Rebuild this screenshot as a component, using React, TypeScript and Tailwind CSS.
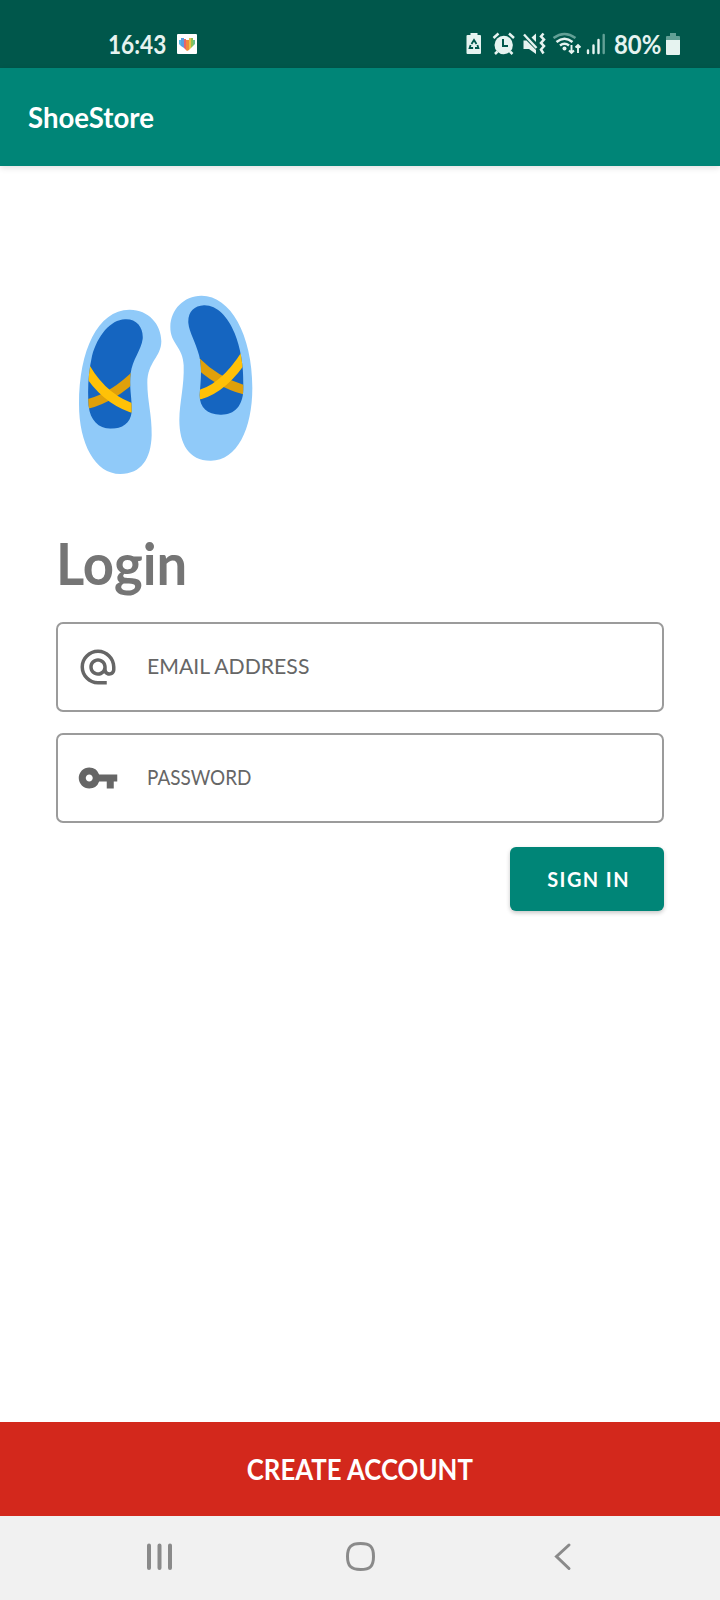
import React from "react";
import { MdAlternateEmail, MdVpnKey } from "react-icons/md";

function HeartBadge() {
  return (
    <svg width="20" height="20" viewBox="0 0 20 20">
      <rect width="20" height="20" rx="1" fill="#fff" />
      <path d="M2 6h2v6L2 10z" fill="#55b9e8" />
      <path d="M4 4h3v10L4 12z" fill="#5a9fe0" />
      <path d="M7 5h2v11L7 14z" fill="#e8646a" />
      <path d="M9 6h3v10l-2 1-1-1z" fill="#f08a3c" />
      <path d="M12 4h2v10l-2 2z" fill="#e8c04a" />
      <path d="M14 4h2v8l-2 2z" fill="#8cc152" />
      <path d="M16 6h2v4l-2 2z" fill="#6cc08a" />
    </svg>
  );
}

function StatusIcons() {
  return (
    <svg width="146" height="30" viewBox="0 0 146 30" fill="none" stroke="#e6f3f0">
      <g stroke="none" fill="#e6f3f0">
        <path d="M5.500 3h7v2h2.500q1 0 1 1v17q0 1-1 1H2.500q-1 0-1-1V6q0-1 1-1h3z" />
        <circle cx="38.700" cy="15" r="9.200" />
        <path d="M58.500 10.500h3l9.500 9.500v4l-7-5h-5.500z" />
        <path d="M66.500 7.500L71 3.500V12z" />
        <circle cx="99.500" cy="18.500" r="2" />
      </g>
      <g stroke="#00574b">
        <path d="M6.500 14l2.500-4 2.500 4M5.600 15l-1 3h3.500M12.400 15l1 3H10" strokeWidth="1.800" />
        <path d="M38 9v7h5" strokeWidth="2" />
      </g>
      <path d="M28.500 8l5-4.500M49 8l-5-4.500M32.500 21.500l-2.500 2.500M45 21.500l2.500 2.500" strokeWidth="2.500" />
      <path d="M59 4.500L71.500 18" strokeWidth="2.400" />
      <path d="M78.500 3.500l-2.500 3 3 3-3 3.500 3 3-3 3.500 2.500 4" strokeWidth="2.500" />
      <path d="M88.500 8q11-8 22 0" stroke="#62a096" strokeWidth="2.500" />
      <path d="M91.500 12q8-6.500 16 0M95 15.500q4.500-3.500 9 0" strokeWidth="2.500" />
      <path d="M106.500 15v8M104 20.500l2.500 2.500 2.500-2.500M113 23v-8M110.500 17.500L113 15l2.500 2.500" strokeWidth="1.900" />
      <g strokeWidth="2.400" strokeLinecap="round">
        <path d="M123 20.500v2.500M128.500 15.500V23M133.500 10v13" />
        <path d="M138.700 5v18" stroke="#62a096" />
      </g>
    </svg>
  );
}

function BatteryIcon() {
  return (
    <svg width="14" height="22" viewBox="0 0 14 22">
      <path d="M4 0h6v3h3q1 0 1 1v3H0V4q0-1 1-1h3z" fill="#62a096" />
      <path d="M0 7h14v14q0 1-1 1H1q-1 0-1-1z" fill="#e6f3f0" />
    </svg>
  );
}

function Flats() {
  return (
    <svg width="210" height="210" viewBox="0 0 630 630">
      <defs>
        <clipPath id="leftInner">
          <path d="M195 118C230 116 251 143 248 177C244 210 217 239 212 280C207 322 216 350 215 396C211 430 188 446 151 446C116 446 90 420 86 378C82 330 85 278 96 228C113 166 151 120 195 118Z" />
        </clipPath>
        <clipPath id="rightInner">
          <path d="M432 76C470 75 504 110 524 160C543 207 552 265 550 330C548 378 524 404 484 404C443 405 419 384 419 346C421 306 428 266 417 225C407 187 388 158 385 129C383 97 402 77 432 76Z" />
        </clipPath>
      </defs>
      <path fill="#90caf9" d="M208 89C264 88 304 132 304 184C304 231 262 246 262 309C262 363 276 405 275 466C273 536 244 582 181 582C105 582 57 491 57 372C57 211 113 91 208 89Z" />
      <path fill="#90caf9" d="M424 47C510 46 577 163 577 323C577 447 531 541 453 542C387 543 358 492 358 420C359 364 373 319 371 256C370 201 330 191 331 140C332 88 371 48 424 47Z" />
      <g clipPath="url(#leftInner)">
        <path d="M70 100h190v360H70z" fill="#1565c0" />
        <path d="M70 375Q154 358 232 280" fill="none" stroke="#dfa00b" strokeWidth="28" />
        <path d="M76 262Q134 362 232 389" fill="none" stroke="#ffc107" strokeWidth="28" />
      </g>
      <g clipPath="url(#rightInner)">
        <path d="M375 65h190v350H375z" fill="#1565c0" />
        <path d="M406 242Q474 311 566 333" fill="none" stroke="#dfa00b" strokeWidth="28" />
        <path d="M402 348Q488 334 559 220" fill="none" stroke="#ffc107" strokeWidth="28" />
      </g>
    </svg>
  );
}

function Field({ icon, label, labelClass }: { icon: React.ReactNode; label: string; labelClass: string }) {
  return (
    <div className="flex h-[90px] items-center rounded-[7px] border-2 border-[#9b9b9b] pl-[19px] text-[#666]">
      {icon}
      <span className={`mb-[3px] ml-7 origin-left whitespace-nowrap text-[21px] leading-none ${labelClass}`}>{label}</span>
    </div>
  );
}

export default function App() {
  return (
    <div className="flex h-[1600px] w-[720px] flex-col overflow-hidden bg-white font-['Lato',sans-serif]">
      <header className="flex h-[68px] shrink-0 items-start bg-[#00574b] pt-[30px] text-[#e6f3f0]">
        <div className="ml-[108px] w-[69px] whitespace-nowrap text-[26px] leading-[29px] font-bold">
          <span className="inline-block origin-left scale-x-[0.87]">16:43</span>
        </div>
        <div className="pt-1"><HeartBadge /></div>
        <div className="ml-[268px]"><StatusIcons /></div>
        <div className="ml-[3px] w-[52px] whitespace-nowrap text-[26px] leading-[29px] font-bold">
          <span className="inline-block origin-left scale-x-[0.92]">80%</span>
        </div>
        <div className="pt-[3px]"><BatteryIcon /></div>
      </header>
      <div className="z-10 flex h-[98px] shrink-0 items-center bg-[#008577] pl-[28px] shadow-[0_2px_6px_rgba(0,0,0,0.12)]">
        <h1 className="origin-left scale-x-[0.985] text-[28px] leading-none font-bold text-white">ShoeStore</h1>
      </div>
      <main className="flex flex-1 flex-col px-[56px] pt-[114px]">
        <div className="ml-1 h-[210px]"><Flats /></div>
        <h2 className="mt-[41px] h-[91px] w-fit origin-left scale-x-[0.955] text-[57px] leading-[64px] font-bold text-[#757575]">Login</h2>
        <div className="flex flex-col gap-[21px]">
          <Field icon={<MdAlternateEmail size={42} />} label="EMAIL ADDRESS" labelClass="scale-x-[1.01]" />
          <Field icon={<MdVpnKey size={42} />} label="PASSWORD" labelClass="scale-x-[0.9]" />
        </div>
        <button className="mt-6 flex h-16 w-[154px] items-center justify-center self-end rounded-md bg-[#008577] pb-[2px] pl-[3px] text-[21px] leading-none font-bold text-white shadow-[0_2px_4px_rgba(0,0,0,0.22)]">
          <span className="scale-x-[0.95] tracking-[1.5px]">SIGN IN</span>
        </button>
      </main>
      <button className="flex h-[94px] shrink-0 items-center justify-center bg-[#d3281c] text-[28px] leading-none font-bold text-white">
        <span className="scale-x-[0.92] whitespace-nowrap">CREATE ACCOUNT</span>
      </button>
      <nav className="flex h-[84px] shrink-0 items-start bg-[#f1f1f1] pt-[25px]">
        <svg className="ml-[145px]" width="30" height="32" fill="none" stroke="#8a8a8a" strokeWidth="4" strokeLinecap="round">
          <path d="M4 4.500v22.500M14.500 4.500v22.500M25 4.500v22.500" />
        </svg>
        <svg className="ml-[170px]" width="32" height="32" fill="none" stroke="#8a8a8a" strokeWidth="3">
          <path d="M15.500 2.500C25 2.500 28.500 5.500 28.500 15.500S25 28.500 15.500 28.500S2.500 25 2.500 15.500S6 2.500 15.500 2.500Z" />
        </svg>
        <svg className="ml-[175px]" width="24" height="32" fill="none" stroke="#8a8a8a" strokeWidth="3" strokeLinecap="round">
          <path d="M17 4L4.500 15.500L17 27.500" />
        </svg>
      </nav>
    </div>
  );
}
